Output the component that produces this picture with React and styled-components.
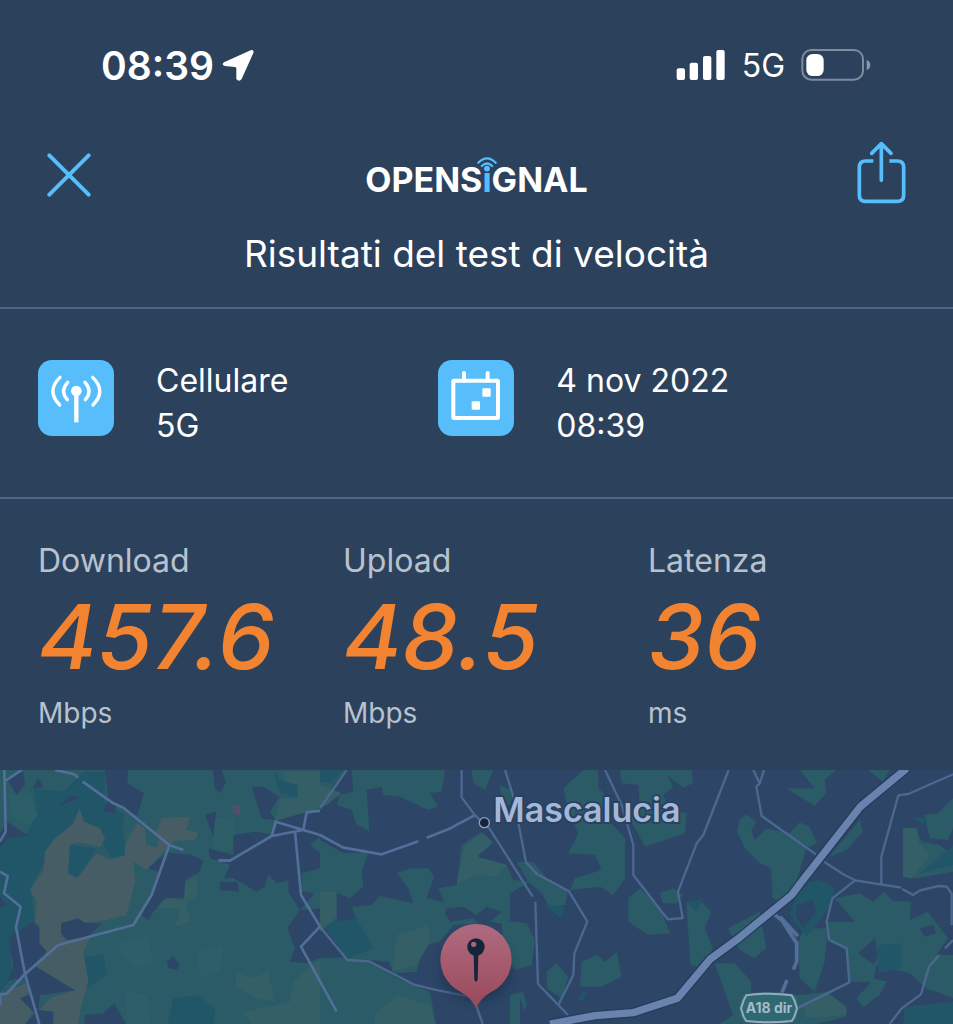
import React from "react";
import styled, { createGlobalStyle } from "styled-components";

const GlobalStyle = createGlobalStyle`
  * {
    box-sizing: border-box;
  }

  body {
    margin: 0;
    background-color: #2c425c;
    color: #ffffff;
    font-family: Inter, "Liberation Sans", sans-serif;
  }
`;

const results = [
  { label: "Download", value: "457.6", unit: "Mbps" },
  { label: "Upload", value: "48.5", unit: "Mbps" },
  { label: "Latenza", value: "36", unit: "ms" },
];

function LocationArrow() {
  return (
    <svg width="32" height="33" viewBox="667 87 96 99" fill="#fff" aria-hidden="true">
      <path d="M673 127 L753 91 Q764 88 761 99 L726 177 Q718 188 710 177 L710 145 Q710 141 705 141 L676 138 Q664 134 673 127Z" />
    </svg>
  );
}

function SignalBars() {
  return (
    <svg width="50" height="32" viewBox="106 84 150 96" fill="#fff" aria-hidden="true">
      <rect x="108" y="142" width="25" height="35" rx="6" />
      <rect x="147" y="125" width="25" height="52" rx="6" />
      <rect x="187" y="105" width="25" height="72" rx="6" />
      <rect x="227" y="87" width="25" height="90" rx="6" />
    </svg>
  );
}

function Battery() {
  return (
    <svg width="70" height="32" viewBox="484 84 210 96" aria-hidden="true">
      <rect x="488" y="87" width="182" height="89" rx="27" fill="none" stroke="#7f8c9d" strokeWidth="6" />
      <rect x="500" y="99" width="52" height="66" rx="19" fill="#fff" />
      <path d="M681 116 Q692 121 692 132 Q692 143 681 148Z" fill="#8a96a5" />
    </svg>
  );
}

function CloseIcon() {
  return (
    <svg width="44" height="44" viewBox="141 399 132 132" aria-hidden="true">
      <path d="M148 406 L266 524 M266 406 L148 524" stroke="#58bdfb" strokeWidth="12" strokeLinecap="round" />
    </svg>
  );
}

function ShareIcon() {
  return (
    <svg
      width="49"
      height="69"
      viewBox="650 364 147 207"
      fill="none"
      stroke="#58bdfb"
      strokeWidth="11"
      aria-hidden="true"
    >
      <path d="M699 424 H676 Q657 424 657 443 V526 Q657 545 676 545 H771 Q790 545 790 526 V443 Q790 424 771 424 H747" />
      <path d="M723 482 V372 M694 401 L723 372 L752 401" strokeLinecap="round" strokeLinejoin="round" />
    </svg>
  );
}

function TowerIcon() {
  return (
    <svg width="76" height="76" viewBox="114 60 228 228" fill="none" stroke="#fff" strokeWidth="10" aria-hidden="true">
      <circle cx="229" cy="153" r="16" fill="#fff" stroke="none" />
      <path d="M229 153 V247" strokeWidth="13" />
      <path d="M203 127 Q179 153 202 179 M255 127 Q279 153 256 179" strokeLinecap="round" />
      <path d="M180 112 Q138 153 179 195 M278 112 Q320 153 279 195" strokeLinecap="round" />
    </svg>
  );
}

function CalendarIcon() {
  return (
    <svg width="76" height="76" viewBox="57 60 228 228" fill="#fff" aria-hidden="true">
      <rect x="103" y="122" width="134" height="112" rx="2" fill="none" stroke="#fff" strokeWidth="12" />
      <path d="M135 99 V120 M206 99 V120" stroke="#fff" strokeWidth="12" strokeLinecap="round" />
      <rect x="190" y="145" width="25" height="25" rx="3" />
      <rect x="158" y="184" width="25" height="25" rx="3" />
    </svg>
  );
}

function CoverageMap() {
  return (
    <MapDrawing viewBox="0 15 2859 762" preserveAspectRatio="xMidYMid slice" role="img" aria-label="Mappa">
      <defs>
        <linearGradient id="pin" x1="0" y1="0" x2="0" y2="1">
          <stop offset="0" stopColor="#ad6b80" />
          <stop offset="0.5" stopColor="#a65a6d" />
          <stop offset="1" stopColor="#98495a" />
        </linearGradient>
        <filter id="soft" x="-30%" y="-30%" width="160%" height="160%">
          <feGaussianBlur stdDeviation="12" />
        </filter>
      </defs>
      <rect y="0" width="2859" height="790" fill="#2d4566" />

      {/* west: woodland */}
      <g>
        <path fill="#2b5b67" d="M0 0H960V790H0Z" />
        <g fill="#215669">
          <path d="M0 205 L80 210 L110 140 L100 70 L190 80 L250 20 H315 V110 L375 150 L365 190 L385 275 L330 275 L290 200 L160 225 L130 300 L90 370 L105 470 L30 520 L35 640 L0 680Z" />
          <path d="M205 240 L290 250 L232 340 L204 325Z" />
          <path d="M250 580 L310 568 L320 630 L262 670Z" />
          <path d="M520 700 L590 690 L645 730 L640 790 H500Z" />
          <path d="M820 20 L850 50 L892 60 L893 100 L840 85Z" />
        </g>
        <g fill="#2d5f69">
          <path d="M25 90 L90 85 L115 150 L90 180 L35 150Z" />
          <path d="M640 160 L700 155 L708 240 L680 260 L640 245Z" />
          <path d="M672 290 L705 290 L708 345 L685 350Z" />
          <path d="M350 540 L440 510 L460 600 L400 610Z" />
          <path d="M590 560 L670 540 L660 620 L600 640Z" />
          <path d="M380 680 L440 690 L450 780 H380Z" />
        </g>
        <g fill="#345f66">
          <path d="M845 20 H960 V130 L880 160 L825 165 L840 100 L893 100 L893 60 L860 50Z" />
          <path d="M555 350 L590 335 L595 390 L560 415 L570 470 L525 485 L540 430 L465 430 L500 395 L545 405Z" />
          <path d="M705 620 L760 640 L805 620 L825 710 L775 700 L710 670Z" />
          <path d="M960 580 L880 650 L870 710 L730 740 L760 790 H960Z" />
        </g>
        <g fill="#475d65">
          <path d="M220 175 L238 130 L252 170 L300 190 L315 220 L300 245 L232 232 L210 240 L204 325 L232 340 L290 265 L330 285 L375 270 L375 240 L410 175 L465 210 L485 158 L570 155 L560 195 L595 205 L585 225 L520 228 L440 315 L400 290 L405 350 L380 450 L320 465 L185 480 L185 515 L270 520 L250 560 L265 650 L245 720 L232 790 H160 L160 740 L120 735 L150 700 L225 675 L105 610 L140 560 L118 535 L118 480 L105 470 L110 410 L90 375 L130 315 L135 260 L160 225Z" />
          <path d="M0 690 L75 655 L95 680 L60 700 L100 740 L65 790 H0Z" />
          <path d="M312 15 H335 L325 32Z" />
        </g>
        <path fill="#2b5b67" d="M435 190 L478 220 L470 248 L438 240Z" />
        <g fill="#2d4566">
          <path d="M315 15 H385 L382 55 L432 85 L412 150 L395 150 L350 120 L345 145 L308 140 L325 105Z" />
          <path d="M20 40 L70 20 L75 60 L50 90Z" />
          <path d="M115 38 L130 68 H100Z M175 123 L215 90 L240 100Z" />
          <path d="M20 170 L85 212 L25 220 L0 245 V205Z" />
          <path d="M500 262 L575 270 L610 287 L598 320 L556 345 L552 400 L495 400 L460 440 L445 465 L425 450 L450 400 L475 320 L445 310Z" />
          <path d="M100 470 L118 490 V535 L140 560 L100 600 L225 676 L120 690 L115 735 L160 740 L158 790 H65 L105 745 L60 700 L90 690 L75 640 L25 645 L40 600 L25 520Z" />
          <path d="M183 475 L235 460 L255 475 L305 475 L265 515 L200 525 L183 505Z" />
          <path d="M500 590 L520 573 L538 600 L530 614 L508 610Z" />
          <path d="M255 750 L310 745 L343 715 L385 790 H250Z" />
          <path d="M638 15 H665 L678 50 L660 85 L645 70Z" />
          <path d="M755 65 L790 65 L837 95 L810 140 L825 165 L785 160Z" />
          <path d="M615 150 L648 140 L640 215Z" />
          <path d="M625 250 L700 270 L700 210 L770 200 L820 210 L835 165 L960 130 V310 L905 325 L910 380 L945 385 L900 435 L865 380 L865 345 L830 355 L805 328 L795 365 L770 380 L700 340 L672 340 L690 300 L630 280Z" />
          <path d="M660 350 L710 350 L718 380 L660 375Z" />
          <path d="M900 435 L960 430 V580 L920 595 L870 590 L885 550 L862 490Z" />
          <path d="M0 395 L20 420 L0 430Z" />
        </g>
        <path fill="#2b5b67" d="M960 215 L930 240 L960 265Z M905 345 L960 310 V420 L935 415 L940 375 L905 380Z" />
        <path fill="#564e69" d="M698 122 H720 V152 L698 142Z" />
      </g>

      {/* town centre */}
      <g transform="translate(960 0)">
        <g fill="#2b5b67">
          <path d="M0 15 H75 L10 105 L0 130Z" />
          <path d="M95 15 H375 L365 80 L330 85 L355 125 L325 135 L240 95 L190 90 L185 65 L140 75 L148 198 L110 180 L95 135 L50 120 L60 90 L100 80Z" />
          <path d="M455 15 H520 L495 75 L460 55Z" />
          <path d="M0 225 L70 265 L145 262 L125 320 L130 365 L90 400 L50 385 L50 465 L0 500Z" />
          <path d="M230 325 L270 310 L325 310 L342 335 L320 400 L385 415 L375 445 L390 470 L460 460 L475 475 L400 480 L360 530 L310 540 L290 620 L225 625 L205 590 L80 580 L20 490 L110 465 L95 425 L155 420 L180 393 L280 415 L265 370Z" />
          <path d="M425 240 L485 200 L520 235 L470 275 L560 300 L580 345 L630 350 L570 385 L570 480 L510 470 L545 440 L500 425 L470 450 L430 425 L380 430 L355 370 L410 360Z" />
          <path d="M540 60 L580 80 L570 120 L545 115Z" />
          <path d="M590 290 L640 290 L680 340 L745 375 L735 420 L690 430 L665 385 L625 350Z" />
          <path d="M730 70 L790 15 H835 L835 70 L865 100 L860 160 L915 220 L915 340 L880 390 L840 365 L750 375 L765 340 L845 315 L825 270 L745 265 L775 205 L745 140Z" />
          <path d="M900 15 H1115 L1118 55 L1090 68 L1040 30 L1060 65 L1030 90 L1045 130 L1100 145 L1095 205 L1035 225 L975 245 L945 190 L920 150 L960 120 L955 60 L905 55Z" />
          <path d="M545 465 L620 475 L645 525 L635 600 L585 615 L550 575Z" />
          <path d="M680 620 L710 595 L745 635 L725 700 L680 670Z" />
          <path d="M785 590 L830 570 L855 590 L890 560 L905 635 L845 665 L780 665Z" />
          <path d="M570 690 L610 680 L620 720 L595 790 H570Z" />
          <path d="M0 580 L95 575 L160 590 L230 640 L330 680 L350 790 H0Z" />
          <path d="M925 400 L960 370 L1020 430 L1050 505 L985 510 L925 470Z" />
        </g>
        <g fill="#345f66">
          <path d="M0 60 L65 85 L20 120 L0 130Z" />
          <path d="M0 380 L48 380 L50 455 L10 485 H0Z" />
          <path d="M435 240 L490 205 L515 230 L475 275 L560 300 L530 335 L470 330 L410 355Z" />
          <path d="M230 510 L325 480 L330 530 L290 600 L215 620Z" />
          <path d="M165 750 L230 690 L330 720 L350 790 H165Z" />
        </g>
        <g fill="#215669">
          <path d="M0 15 H70 L35 55 L0 50Z M35 470 L110 460 L160 550 L85 580 L20 500Z" />
          <path d="M675 420 L735 425 L722 460Z M770 700 L800 675 L790 710Z" />
        </g>
        <path fill="#2d4566" d="M475 270 L520 235 L524 245 L480 282Z M600 700 L625 770 L600 790Z" />
      </g>

      {/* east: motorway side */}
      <g transform="translate(1899 0)">
        <g fill="#2b5b67">
          <path d="M500 15 H610 L575 45 L580 85 L545 122 L500 95 L460 70 L545 70Z" />
          <path d="M705 15 H770 L750 50Z" />
          <path d="M320 165 L340 148 L370 172 L355 195 L365 225 L400 190 L470 205 L500 172 L530 185 L553 235 L520 250 L480 385 L435 415 L418 395 L415 310 L380 295 L335 250 L312 200Z" />
          <path d="M600 260 L680 165 L690 200 L640 255 L590 275Z" />
          <path d="M960 100 L915 145 L875 150 L890 220 L945 225 L960 190Z" />
          <path d="M810 190 H850 L865 230 L920 240 L960 270 V320 L850 340 L810 335Z" />
          <path d="M160 415 L200 405 L235 440 L215 490 L240 550 L205 610 L172 600Z" />
          <path d="M80 385 L120 370 L150 390 L130 415 L90 415Z" />
          <path d="M285 490 L380 440 L400 550 L365 580 L320 555Z" />
          <path d="M515 490 H585 L575 590 L545 680 L500 640 L495 530Z" />
          <path d="M605 400 L680 385 L720 410 L752 380 L780 408 L835 410 L830 465 L885 440 L945 520 L910 570 L960 570 V700 L880 670 L830 625 L730 600 L720 650 L650 650 L640 550 L580 520 L585 470 L665 470Z" />
          <path d="M245 595 L305 595 L355 650 L355 700 L500 690 L580 680 L640 725 V755 L500 790 H240 L300 750Z" />
          <path d="M670 700 L725 640 L762 650 L740 690 L690 727Z" />
        </g>
        <g fill="#215669">
          <path d="M500 355 L560 345 L605 370 L590 430 L520 515 L470 450Z" />
          <path d="M840 155 L885 160 L870 180Z M960 240 L860 325 L960 300Z" />
          <path d="M735 540 L805 535 V610 L735 625Z M815 725 L960 710 V790 H810Z" />
          <path d="M160 410 L210 402 L190 440Z" />
        </g>
        <path fill="#345f66" d="M810 190 H850 L858 235 L890 270 L835 340 L810 335Z M510 720 L580 680 L640 725 V750 L520 760Z" />
        <g fill="#2d4566">
          <path d="M490 420 L540 405 L550 440 L510 490 L490 455Z" />
          <path d="M675 565 L725 520 L735 570 L725 600Z M860 490 L900 480 L910 505 L875 515Z" />
        </g>
      </g>

      {/* minor roads */}
      <g fill="none" stroke="#526f99" strokeWidth="8" strokeLinejoin="round">
        <path d="M13 15 L17 200 L0 230 M17 47 L65 15 M165 15 L220 27 L235 37 M248 50 L340 115 L370 128 L508 240 L550 255 M508 240 L455 390 L400 480 L175 540 L75 627 L20 686 L0 688 V720" />
        <path d="M0 320 L23 333 L12 385 L62 425 L48 487 L75 627 L118 777" />
        <path d="M655 286 L690 287 L815 213 L910 195 L827 170 L815 213 M910 195 L920 142 L960 137 M910 195 L960 210 L1030 248 L1145 268 L1255 229 M1280 218 L1345 193 L1423 151 M885 200 L903 390 L960 485 L903 545 L1010 740" />
      </g>
      <g fill="none" stroke="#4c6890" strokeWidth="7" strokeLinejoin="round">
        <path d="M1040 15 L960 130 M960 485 L1042 585 L1107 589 L1240 658 L1300 673 L1400 693" />
        <path d="M1385 15 V97 L1425 151 L1468 190 L1598 395 M1606 410 L1614 657 L1704 750" />
        <path d="M1515 15 L1540 95 L1578 292 L1612 328 L1707 379 L1762 470 L1723 565 L1720 630 L1675 720" />
        <path d="M1815 15 L1865 120 L1900 240 V330 L2003 463 L2048 459 L2034 380 L2090 235 L2110 210 L2186 15" />
        <path d="M2260 15 L2279 55 L2292 15 M2279 55 L2269 65 L2285 153 L2448 268 M2472 290 L2530 328 L2565 346 L2703 368 M2707 372 L2739 390 L2758 377 L2815 363 L2840 365 L2855 385 V480" />
        <path d="M2859 28 L2725 87 L2695 91 L2644 275 V357 M2565 346 L2497 400 L2480 470 L2488 525 L2540 550 L2548 652 L2395 728 M2859 525 L2835 550 M2818 570 L2787 605 L2763 688 L2705 730 L2669 777" />
        <path d="M1430 725 L1448 777" />
      </g>
      <g fill="none" stroke="#526f99" strokeWidth="11">
        <path d="M2305 435 L2345 465 L2390 535 V590 L2380 614 M2361 645 L2345 685 M2340 455 L2394 514" />
      </g>

      {/* A18 */}
      <g fill="none" strokeLinejoin="round">
        <path d="M2720 10 L2582 124 L2407 347 L2375 390 L2212 523 L2130 583 L2032 700 L1899 743 L1785 752 L1650 777" stroke="#263c5c" strokeWidth="30" />
        <path d="M2720 10 L2582 124 L2407 347 L2375 390 L2212 523 L2130 583 L2032 700 L1899 743 L1785 752 L1650 777" stroke="#6783ae" strokeWidth="22" />
      </g>

      <MapLabel x="1480" y="170">
        Mascalucia
      </MapLabel>
      <circle cx="1453" cy="173" r="15" fill="#14253b" stroke="#8ea4c7" strokeWidth="4" />

      {/* road shield */}
      <path d="M2235 687 Q2307 675 2379 687 Q2389 690 2392 708 L2397 730 L2390 757 Q2387 769 2377 771 Q2307 781 2237 771 Q2227 769 2224 757 L2217 730 L2224 705 Q2227 689 2235 687Z" fill="#2c6b70" />
      <path d="M2239 691 Q2307 681 2375 691 L2383 706 L2391 730 L2383 755 L2375 768 Q2307 776 2239 768 L2231 755 L2223 730 L2231 706Z" fill="#2f6970" stroke="#96a9c1" strokeWidth="6" />
      <ShieldLabel x="2307" y="745">
        A18 dir
      </ShieldLabel>

      {/* pin */}
      <ellipse cx="1428" cy="610" rx="108" ry="100" fill="#1c2e48" opacity="0.6" filter="url(#soft)" />
      <path
        d="M1428 477 A107 107 0 0 1 1475 680 Q1443 697 1428 729 Q1413 697 1381 680 A107 107 0 0 1 1428 477Z"
        fill="url(#pin)"
      />
      <path d="M1421 565 H1435 L1433 644 Q1428 656 1423 644Z" fill="#14253b" />
      <circle cx="1428" cy="546" r="26" fill="#14253b" />
      <circle cx="1421" cy="538" r="8" fill="#a76478" />
    </MapDrawing>
  );
}

function App() {
  return (
    <Page>
      <GlobalStyle />
      <StatusBar>
        <Clock>
          08:39
          <LocationArrow />
        </Clock>
        <StatusIcons>
          <SignalBars />
          <Network>5G</Network>
          <Battery />
        </StatusIcons>
      </StatusBar>

      <Header>
        <IconButton type="button" aria-label="Chiudi">
          <CloseIcon />
        </IconButton>
        <Logo>
          OPENS
          <LogoI>
            ı
            <LogoWaves viewBox="412 80 68 50" aria-hidden="true">
              <circle cx="446" cy="119" r="9" fill="#58bdfb" />
              <path d="M430 111 Q446 95 462 111 M419 101 Q446 73 473 101" fill="none" stroke="#58bdfb" strokeWidth="7" strokeLinecap="round" />
            </LogoWaves>
          </LogoI>
          GNAL
        </Logo>
        <IconButton type="button" aria-label="Condividi">
          <ShareIcon />
        </IconButton>
      </Header>
      <Title>Risultati del test di velocità</Title>

      <Info>
        <InfoItem>
          <Tile>
            <TowerIcon />
          </Tile>
          <InfoText>
            Cellulare
            <br />
            5G
          </InfoText>
        </InfoItem>
        <InfoItem>
          <Tile>
            <CalendarIcon />
          </Tile>
          <InfoText>
            4 nov 2022
            <br />
            08:39
          </InfoText>
        </InfoItem>
      </Info>

      <Results>
        {results.map((item) => (
          <div key={item.label}>
            <Label>{item.label}</Label>
            <Value>{item.value}</Value>
            <Unit>{item.unit}</Unit>
          </div>
        ))}
      </Results>

      <CoverageMap />
    </Page>
  );
}
export default App;

const Page = styled.main`
  display: flex;
  flex-direction: column;
  min-height: 100vh;
  overflow: hidden;
`;

const StatusBar = styled.div`
  display: flex;
  justify-content: space-between;
  align-items: center;
  height: 130px;
  padding: 0 82px 0 101px;
`;

const Clock = styled.div`
  display: flex;
  align-items: center;
  gap: 8px;
  font-size: 39px;
  font-weight: 600;
`;

const StatusIcons = styled.div`
  display: flex;
  align-items: center;
  gap: 16px;
`;

const Network = styled.span`
  font-size: 32px;
`;

const Header = styled.header`
  display: grid;
  grid-template-columns: 1fr auto 1fr;
  align-items: center;
  height: 90px;
  padding: 0 47px;
`;

const IconButton = styled.button`
  display: flex;
  padding: 0;
  border: none;
  background: none;
  cursor: pointer;

  &:first-child {
    justify-self: start;
  }

  &:last-child {
    justify-self: end;
  }
`;

const Logo = styled.div`
  display: flex;
  padding-top: 8px;
  font-size: 34px;
  font-weight: 700;
`;

const LogoI = styled.span`
  position: relative;
  color: #58bdfb;
`;

const LogoWaves = styled.svg`
  position: absolute;
  top: -3px;
  left: 50%;
  width: 22px;
  margin-left: -11px;
`;

const Title = styled.h1`
  margin: 0;
  padding: 8px 0 27px;
  border-bottom: 2px solid #496889;
  font-size: 37px;
  font-weight: 400;
  line-height: 52px;
  text-align: center;
`;

const Info = styled.section`
  display: grid;
  grid-template-columns: 7fr 9fr;
  padding: 49px 0 49px 38px;
  border-bottom: 2px solid #496889;
`;

const InfoItem = styled.div`
  display: flex;
  align-items: flex-start;
  gap: 42px;
`;

const Tile = styled.div`
  display: flex;
  width: 76px;
  height: 76px;
  margin-top: 2px;
  border-radius: 14px;
  background-color: #58bdfb;
`;

const InfoText = styled.p`
  margin: 0;
  font-size: 32px;
  line-height: 45px;
`;

const Results = styled.section`
  display: grid;
  grid-template-columns: repeat(3, 1fr);
  padding: 40px 0 35px 38px;
`;

const Label = styled.div`
  color: #b8c2cf;
  font-size: 32px;
  line-height: 44px;
`;

const Value = styled.div`
  color: #f28330;
  font-size: 90px;
  font-style: italic;
  font-weight: 500;
  line-height: 108px;
`;

const Unit = styled.div`
  color: #b8c2cf;
  font-size: 28px;
  line-height: 44px;
`;

const MapDrawing = styled.svg`
  display: block;
  flex: 1;
  width: 100%;
  min-height: 254px;
`;

const MapLabel = styled.text`
  fill: #a3b8d9;
  stroke: #2b4160;
  stroke-width: 12px;
  paint-order: stroke;
  font-size: 102px;
  font-weight: 600;
`;

const ShieldLabel = styled.text`
  fill: #a7b9cb;
  font-size: 42px;
  font-weight: 700;
  text-anchor: middle;
`;
